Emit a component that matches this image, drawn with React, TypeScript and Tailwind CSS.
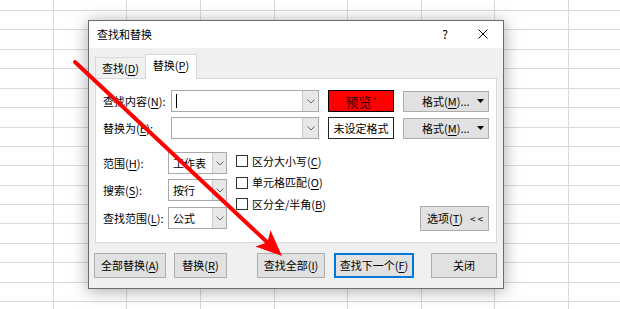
import type { ReactNode } from "react";

// Excel "查找和替换" dialog floating over a sheet grid, with a red pointer arrow.

const ROW_H = [11, 19, 20, 19, 20, 19, 20, 19, 19, 20, 19, 19, 20, 19, 20, 19, 7];
const COL_W = [54, 73, 74, 74, 73, 74, 73, 74, 51];

function SheetGrid() {
  return (
    <div className="flex flex-col">
      {ROW_H.map((h, r) => (
        <div key={r} className="flex" style={{ height: h }}>
          {COL_W.map((w, c) => (
            <div
              key={c}
              className={`box-border border-[#d9d9d9] ${r < ROW_H.length - 1 ? "border-b" : ""} ${c < COL_W.length - 1 ? "border-r" : ""}`}
              style={{ width: w }}
            />
          ))}
        </div>
      ))}
    </div>
  );
}

function Chevron() {
  return (
    <svg width="8" height="5" viewBox="0 0 8 5">
      <polyline points="0.5,0.5 4,4 7.5,0.5" fill="none" stroke="#666" strokeWidth="1" />
    </svg>
  );
}

function DropTriangle() {
  return (
    <svg width="7" height="4" viewBox="0 0 7 4">
      <polygon points="0,0 7,0 3.5,4" fill="#000" />
    </svg>
  );
}

function Key({ k }: { k: string }) {
  return (
    <>
      (<u className="underline-offset-2">{k}</u>)
    </>
  );
}

function Combo({ cursor }: { cursor?: boolean }) {
  return (
    <div className="box-border flex h-[22px] w-[148px] border border-[#a9a9a9] bg-white">
      <div className="flex flex-1 items-center pl-[4px]">
        {cursor ? <div className="h-[14px] w-px bg-black" /> : null}
      </div>
      <div className="flex w-[16px] items-center justify-center border-l border-[#c8c8c8] bg-[#e8e8e8]">
        <Chevron />
      </div>
    </div>
  );
}

function Select({ value }: { value: string }) {
  return (
    <div className="box-border flex h-[22px] w-[59px] border border-[#a9a9a9] bg-white">
      <div className="flex flex-1 items-center pl-[4px]">{value}</div>
      <div className="flex w-[14px] items-center justify-center border-l border-[#c8c8c8] bg-[#e8e8e8]">
        <Chevron />
      </div>
    </div>
  );
}

function FormatButton() {
  return (
    <div className="box-border flex h-[21px] w-[86px] items-center border border-[#adadad] bg-[#e1e1e1] pl-[18px] pr-[4px]">
      <span>
        格式<Key k="M" />...
      </span>
      <span className="ml-auto flex">
        <DropTriangle />
      </span>
    </div>
  );
}

function Check({ children }: { children: ReactNode }) {
  return (
    <div className="flex h-[18px] items-center">
      <div className="box-border h-[12px] w-[12px] border border-[#333] bg-white" />
      <span className="ml-[4px]">{children}</span>
    </div>
  );
}

export default function App() {
  return (
    <div className="relative h-[309px] w-[620px] overflow-hidden bg-white font-['Noto_Sans_CJK_SC','Microsoft_YaHei',sans-serif] text-[11px] leading-none text-black">
      <SheetGrid />

      <div className="absolute left-[88px] top-[20px] box-border flex h-[269px] w-[416px] flex-col border border-[#6b6b6b] bg-[#f0f0f0] shadow-[0_2px_16px_rgba(0,0,0,0.35)]">
        <div className="flex h-[27px] items-center bg-white pb-[1px] pl-[8px]">
          <span>查找和替换</span>
          <span className="ml-auto mr-[30px] text-[12px]">?</span>
          <svg className="mr-[15px]" width="10" height="10" viewBox="0 0 10 10">
            <path d="M0.5 0.5 L9.5 9.5 M9.5 0.5 L0.5 9.5" stroke="#000" strokeWidth="1" />
          </svg>
        </div>

        <div className="flex flex-1 flex-col px-[6px] pt-[6px]">
          <div className="flex h-[24px] items-end">
            <div className="box-border flex h-[21px] w-[50px] items-center justify-center border-l border-t border-[#d9d9d9] bg-[#f0f0f0] pt-[1px]">
              查找<Key k="D" />
            </div>
            <div className="relative z-10 -mb-px box-border flex h-[25px] w-[52px] items-center justify-center border-l border-r border-t border-[#d9d9d9] bg-white pb-[3px]">
              替换<Key k="P" />
            </div>
          </div>

          <div className="box-border flex h-[165px] w-[402px] flex-col border border-[#d9d9d9] bg-white px-[7px] pt-[11px]">
            <div className="flex items-center">
              <span className="w-[68px]">
                查找内容<Key k="N" />:
              </span>
              <Combo cursor />
              <div className="ml-[9px] box-border flex h-[22px] w-[66px] items-center justify-center border border-black bg-[#ff0000] text-[13px] text-[#3a0000]">
                预览<span className="ml-[1px] text-[8px]">*</span>
              </div>
              <div className="ml-[9px]">
                <FormatButton />
              </div>
            </div>

            <div className="mt-[5px] flex items-center">
              <span className="w-[68px]">
                替换为<Key k="E" />:
              </span>
              <Combo />
              <div className="ml-[9px] box-border flex h-[22px] w-[66px] items-center justify-center border border-[#222] bg-white">
                未设定格式
              </div>
              <div className="ml-[9px]">
                <FormatButton />
              </div>
            </div>

            <div className="mt-[13px] flex">
              <div className="flex flex-col">
                <div className="flex items-center">
                  <span className="w-[65px]">
                    范围<Key k="H" />:
                  </span>
                  <Select value="工作表" />
                </div>
                <div className="mt-[5px] flex items-center">
                  <span className="w-[65px]">
                    搜索<Key k="S" />:
                  </span>
                  <Select value="按行" />
                </div>
                <div className="mt-[6px] flex items-center">
                  <span className="w-[65px]">
                    查找范围<Key k="L" />:
                  </span>
                  <Select value="公式" />
                </div>
              </div>

              <div className="ml-[9px] flex flex-col gap-[3.5px]">
                <Check>
                  区分大小写<Key k="C" />
                </Check>
                <Check>
                  单元格匹配<Key k="O" />
                </Check>
                <Check>
                  区分全/半角<Key k="B" />
                </Check>
              </div>

              <div className="-mb-[2px] ml-auto box-border flex h-[25px] w-[69px] items-center self-end border border-[#adadad] bg-[#e1e1e1] pl-[6px]">
                <span>
                  选项<Key k="T" />
                </span>
                <span className="ml-[7px] text-[10px] tracking-[2px]">&lt;&lt;</span>
              </div>
            </div>
          </div>

          <div className="-ml-px mt-[10px] flex">
            <div className="box-border flex h-[25px] w-[72px] items-center justify-center border border-[#adadad] bg-[#e1e1e1]">
              全部替换<Key k="A" />
            </div>
            <div className="ml-[8px] box-border flex h-[25px] w-[53px] items-center justify-center border border-[#adadad] bg-[#e1e1e1]">
              替换<Key k="R" />
            </div>
            <div className="ml-[30px] box-border flex h-[25px] w-[68px] items-center justify-center border border-[#adadad] bg-[#e1e1e1]">
              查找全部<Key k="I" />
            </div>
            <div className="ml-[9px] box-border flex h-[25px] w-[80px] items-center justify-center border-2 border-[#0078d7] bg-[#e1e1e1]">
              查找下一个<Key k="F" />
            </div>
            <div className="ml-[17px] box-border flex h-[25px] w-[66px] items-center justify-center border border-[#adadad] bg-[#e1e1e1]">
              关闭
            </div>
          </div>
        </div>
      </div>

      <svg className="pointer-events-none absolute left-0 top-0" width="620" height="309" viewBox="0 0 620 309">
        <line x1="75" y1="62" x2="268" y2="243" stroke="#ff0000" strokeWidth="4" strokeLinecap="round" />
        <polygon points="282,256 255.5,246.5 267.4,242.3 270.5,230.2" fill="#ff0000" />
      </svg>
    </div>
  );
}
